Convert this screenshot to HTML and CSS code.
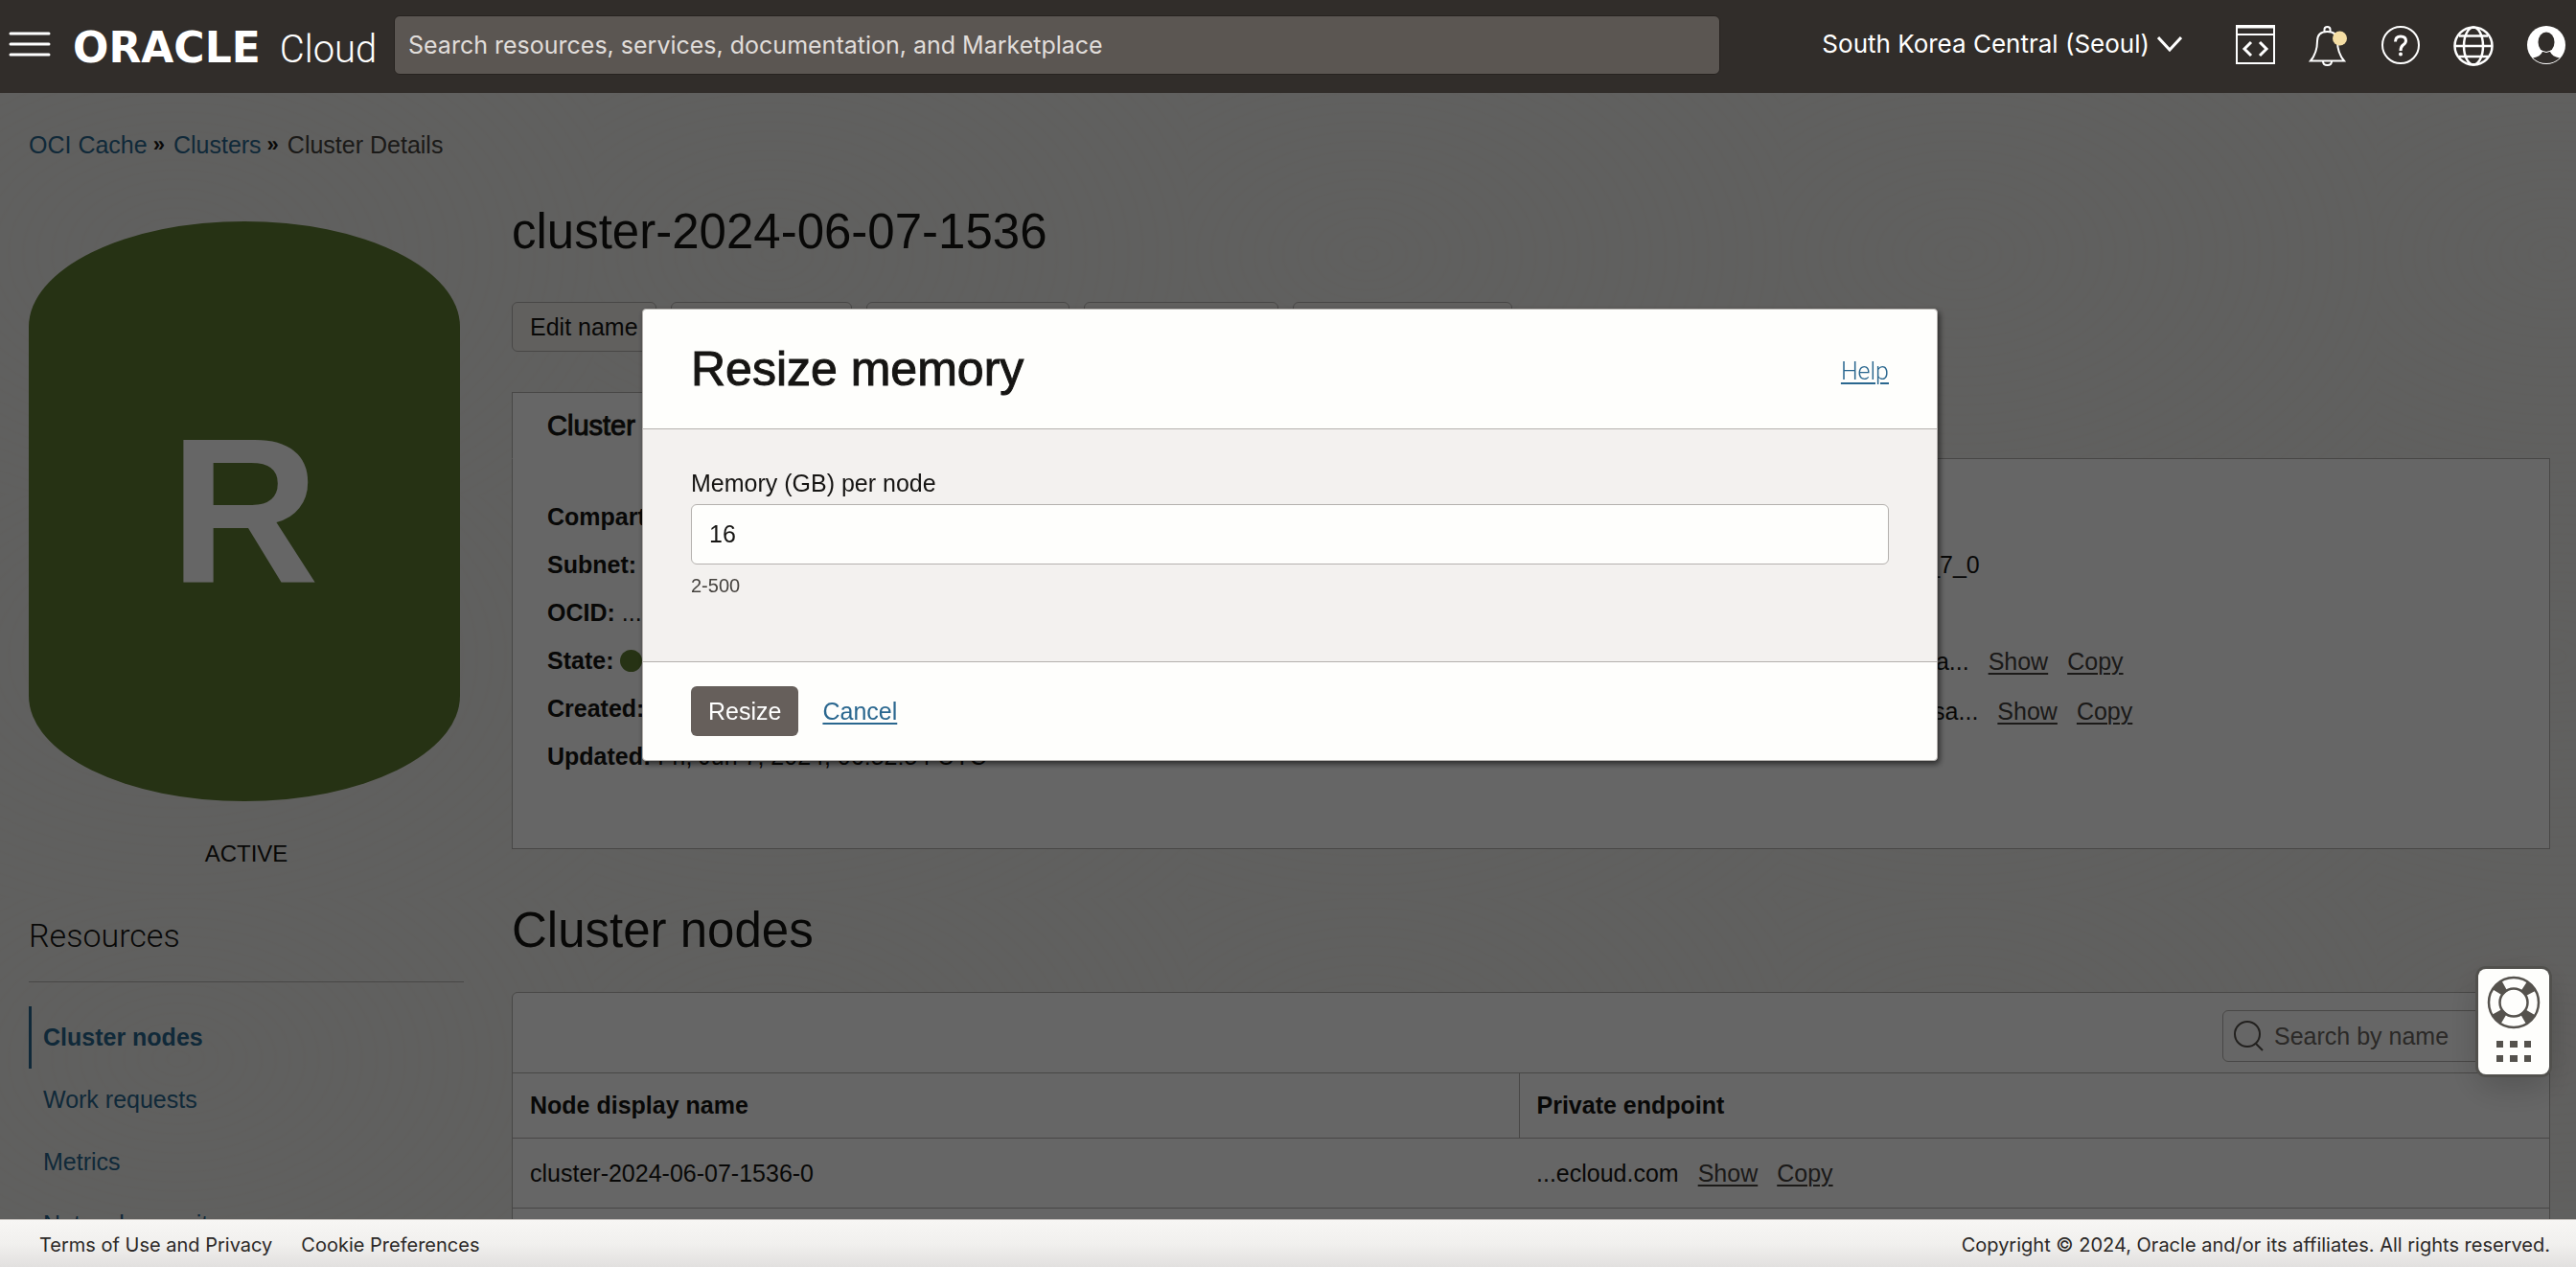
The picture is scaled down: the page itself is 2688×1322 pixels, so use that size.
FILE: index.html
```html
<!DOCTYPE html>
<html lang="en">
<head>
<meta charset="utf-8">
<title>Cluster Details | Oracle Cloud</title>
<link rel="stylesheet" href="styles.css">
</head>
<body>
<header class="topbar">
  <button class="icon-button menu-button" aria-label="Open navigation menu">
    <svg width="44" height="28" viewBox="0 0 44 28"><path d="M2 3H42M2 14H42M2 25H42" stroke="#fff" stroke-width="3" stroke-linecap="round"/></svg>
  </button>
  <a class="brand" href="#"><span class="brand-name">ORACLE</span><span class="brand-product">Cloud</span></a>
  <input class="global-search" type="search" aria-label="Search" placeholder="Search resources, services, documentation, and Marketplace">
  <button class="region">South Korea Central (Seoul)
    <svg width="26" height="16" viewBox="0 0 26 16" fill="none"><path d="M1 1L13 14L25 1" stroke="#fff" stroke-width="3"/></svg>
  </button>
  <nav class="topbar-icons" aria-label="Tools">
    <button class="icon-button" aria-label="Developer tools">
      <svg width="44" height="44" viewBox="0 0 44 44" fill="none" stroke="#fff" stroke-width="2"><path d="M3 2H42V41H3ZM3 11H42"/><path d="M3 3H42" stroke-width="3"/><path d="M18 19L11 26L18 33M27 19L34 26L27 33" stroke-width="3"/></svg>
    </button>
    <button class="icon-button" aria-label="Announcements">
      <svg width="44" height="44" viewBox="0 0 44 44" fill="none" stroke="#fff" stroke-width="2"><path d="M18.500 8V5.500Q18.500 3 21.500 3Q24.500 3 24.500 5.500V8"/><path d="M4 38.500Q11 30 11 18Q11 8 21.500 8Q32 8 32 18Q32 30 39 38.500Z"/><path d="M17 39Q17 43 21.500 43Q26 43 26 39"/><circle cx="34.500" cy="15" r="7.500" fill="#f5dea4" stroke="none"/></svg>
    </button>
    <button class="icon-button" aria-label="Help">
      <svg width="44" height="44" viewBox="0 0 44 44" fill="none" stroke="#fff" stroke-width="2"><circle cx="22" cy="22" r="19"/><path d="M16.500 18.500Q16.500 13 22 13Q27.500 13 27.500 17.500Q27.500 20 24.500 22Q22 24 22 28" stroke-width="3"/><circle cx="22" cy="31.500" r="2" fill="#fff" stroke="none"/></svg>
    </button>
    <button class="icon-button" aria-label="Language">
      <svg width="44" height="44" viewBox="0 0 44 44" fill="none" stroke="#fff" stroke-width="2.500"><circle cx="22" cy="23" r="19.500"/><ellipse cx="22" cy="23" rx="10" ry="19.500"/><path d="M22 3.500V5M2.500 23H41.500M7 12.500H37M7 34H37"/></svg>
    </button>
    <button class="icon-button" aria-label="Profile">
      <svg width="44" height="44" viewBox="0 0 44 44"><circle cx="22" cy="22" r="20" fill="#fff"/><ellipse cx="22" cy="19" rx="8.500" ry="10.500" fill="#312d2a"/><path d="M8 35.500Q16 34 18 29H26Q28 34 36 35.500Q30 41 22 41Q14 41 8 35.500Z" fill="#312d2a"/><path d="M17 28Q22 31 27 28" fill="none" stroke="#fff"/></svg>
    </button>
  </nav>
</header>

<div class="page">
  <nav class="breadcrumb" aria-label="Breadcrumb">
    <a href="#">OCI Cache</a><span class="crumb-sep">»</span><a href="#">Clusters</a><span class="crumb-sep">»</span><span class="crumb-current">Cluster Details</span>
  </nav>
  <div class="layout">
    <aside class="sidebar">
      <div class="status-icon">R</div>
      <p class="status-label">ACTIVE</p>
      <h2 class="resources-title">Resources</h2>
      <ul class="resource-list">
        <li><a class="resource active" href="#">Cluster nodes</a></li>
        <li><a class="resource" href="#">Work requests</a></li>
        <li><a class="resource" href="#">Metrics</a></li>
        <li><a class="resource" href="#">Network security groups</a></li>
      </ul>
    </aside>
    <main class="content">
      <h1 class="title">cluster-2024-06-07-1536</h1>
      <div class="actions">
        <button class="action">Edit name</button>
        <button class="action">Resize nodes</button>
        <button class="action">Resize memory</button>
        <button class="action">Move resource</button>
        <button class="action action-menu">More actions
          <svg width="20" height="12" viewBox="0 0 20 12" fill="none"><path d="M1 1L10 10L19 1" stroke="#161513" stroke-width="2"/></svg>
        </button>
      </div>
      <div class="tabs"><button class="tab">Cluster information</button><button class="tab tab-inactive">Tags</button></div>
      <section class="details">
        <div>
          <p class="detail"><b>Compartment:</b> cache</p>
          <p class="detail"><b>Subnet:</b> private subnet</p>
          <p class="detail"><b>OCID:</b> ...q7oa6a <a class="plain-link" href="#">Show</a> <a class="plain-link" href="#">Copy</a></p>
          <p class="detail"><b>State:</b> <span class="state-dot"></span> Active</p>
          <p class="detail"><b>Created:</b> Fri, Jun 7, 2024, 06:36:51 UTC</p>
          <p class="detail"><b>Updated:</b> Fri, Jun 7, 2024, 06:52:54 UTC</p>
        </div>
        <div>
          <p class="detail"><b>Node count:</b> 3</p>
          <p class="detail"><b>Software version:</b> REDIS_7_0</p>
          <p class="detail"><b>Memory per node:</b> 8 GB</p>
          <p class="detail endpoint"><span><b>Primary endpoint:</b> aaaaqsa...</span><a class="plain-link" href="#">Show</a><a class="plain-link" href="#">Copy</a></p>
          <p class="detail endpoint"><span><b>Replicas endpoint:</b> aaaaqsa...</span><a class="plain-link" href="#">Show</a><a class="plain-link" href="#">Copy</a></p>
        </div>
      </section>
      <h2 class="title nodes-title">Cluster nodes</h2>
      <section class="table-panel">
        <div class="toolbar">
          <label class="node-search">
            <svg width="32" height="32" viewBox="0 0 32 32" fill="none" stroke="#55524d" stroke-width="2"><circle cx="14" cy="14" r="13"/><path d="M23 24L30 31"/></svg>
            <input type="search" placeholder="Search by name" aria-label="Search by name">
          </label>
        </div>
        <table class="nodes">
          <colgroup><col class="col-name"><col></colgroup>
          <thead><tr><th>Node display name</th><th>Private endpoint</th></tr></thead>
          <tbody>
            <tr><td>cluster-2024-06-07-1536-0</td><td><span class="endpoint">...ecloud.com<a class="plain-link" href="#">Show</a><a class="plain-link" href="#">Copy</a></span></td></tr>
            <tr><td>cluster-2024-06-07-1536-1</td><td><span class="endpoint">...ecloud.com<a class="plain-link" href="#">Show</a><a class="plain-link" href="#">Copy</a></span></td></tr>
          </tbody>
        </table>
      </section>
    </main>
  </div>
</div>

<div class="overlay">
  <form class="modal" role="dialog" aria-labelledby="modal-title">
    <div class="modal-head">
      <h2 id="modal-title">Resize memory</h2>
      <a class="help-link" href="#">Help</a>
    </div>
    <div class="modal-body">
      <label for="memory">Memory (GB) per node</label>
      <input id="memory" type="text" inputmode="numeric" value="16" aria-describedby="memory-hint">
      <p class="hint" id="memory-hint">2-500</p>
    </div>
    <div class="modal-foot">
      <button class="primary" type="button">Resize</button>
      <a class="cancel" href="#">Cancel</a>
    </div>
  </form>
</div>

<button class="support" aria-label="Support">
  <svg width="56" height="56" viewBox="0 0 56 56" fill="none" stroke="#55524d">
    <circle cx="28" cy="28" r="20" stroke-width="13" stroke-dasharray="10 21.416" stroke-dashoffset="-10.708"/>
    <circle cx="28" cy="28" r="26" stroke-width="2.500"/><circle cx="28" cy="28" r="14.500" stroke-width="2.500"/>
  </svg>
  <svg width="36" height="22" viewBox="0 0 36 22" fill="#55524d"><path d="M0 0h7v7h-7zM14 0h8v7h-8zM29 0h7v7h-7zM0 15h7v7h-7zM14 15h8v7h-8zM29 15h7v7h-7z"/></svg>
</button>

<footer class="footer">
  <a href="#">Terms of Use and Privacy</a>
  <a href="#">Cookie Preferences</a>
  <span class="copyright">Copyright © 2024, Oracle and/or its affiliates. All rights reserved.</span>
</footer>
</body>
</html>
```
FILE: styles.css
```css
* { box-sizing: border-box; }

body {
  margin: 0;
  height: 100vh;
  overflow: hidden;
  background: #f1f0ed;
  color: #161513;
  font: 25px/30px "Liberation Sans", Arial, sans-serif;
}

h1, h2, p, ul { margin: 0; padding: 0; }
ul { list-style: none; }
svg { display: block; flex: none; }
a { color: #2a678f; text-decoration: none; }
button, input { font: inherit; color: inherit; }
button { cursor: pointer; }

/* Top bar */
.topbar {
  position: relative;
  z-index: 20;
  display: flex;
  align-items: center;
  height: 97px;
  padding: 0 9px;
  background: #312d2a;
  color: #fff;
  font-family: Inter, "Liberation Sans", sans-serif;
}
.icon-button { padding: 0; border: 0; background: none; }
.menu-button { margin-right: 23px; padding-bottom: 6px; }
.brand { display: flex; align-items: baseline; gap: 20px; width: 335px; color: #fff; white-space: nowrap; padding-top: 5px; }
.brand-name { font: bold 44px/48px "DejaVu Sans", sans-serif; }
.brand-product { font: 300 40px/48px Roboto, sans-serif; }
.global-search {
  flex: 0 1 1384px;
  min-width: 0;
  height: 62px;
  margin-bottom: 3px;
  padding: 0 14px;
  border: 1px solid #26221f;
  border-radius: 6px;
  background: #5b5652;
}
.global-search::placeholder { color: #e0ddda; opacity: 1; }
.region {
  display: flex;
  align-items: center;
  gap: 8px;
  margin-left: auto;
  margin-right: 54px;
  padding: 0 0 6px;
  border: 0;
  background: none;
  font-size: 26px;
  white-space: nowrap;
}
.topbar-icons { display: flex; gap: 32px; padding-bottom: 4px; }

/* Page */
.page {
  min-height: 100vh;
  padding: 39px 27px 0 30px;
  background:
    repeating-radial-gradient(ellipse 300px 200px at 30% 40%, transparent 0 3%, rgba(120, 110, 90, .02) 4%, transparent 5%) 0 0 / 620px 420px,
    #f1f0ed;
}
.breadcrumb { display: flex; color: #161513; }
.crumb-sep { margin: 0 9px 0 6px; font-weight: bold; font-size: 22px; }
.crumb-current { color: #45423e; }
.layout { display: grid; grid-template-columns: 454px 1fr; column-gap: 50px; margin-top: 46px; }

.status-icon {
  display: flex;
  align-items: center;
  justify-content: center;
  width: 450px;
  height: 605px;
  margin-top: 19px;
  padding-bottom: 4px;
  border-radius: 225px / 110px;
  background: #5f7d32;
  color: #fff;
  font-size: 216px;
  font-weight: bold;
}
.status-label { margin-top: 40px; text-align: center; font-size: 24px; }
.resources-title {
  margin-top: 50px;
  padding-bottom: 28px;
  border-bottom: 1px solid #b4b1ae;
  font: 300 34px/40px Roboto, sans-serif;
}
.resource-list { margin-top: 25px; }
.resource { display: block; padding-left: 12px; border-left: 3px solid transparent; line-height: 65px; }
.resource.active { border-left-color: #2a678f; font-weight: bold; }

.content { min-width: 0; }
.title { font-size: 51px; line-height: 60px; font-weight: normal; }
.actions { display: flex; gap: 15px; margin-top: 43px; }
.action {
  height: 52px;
  padding: 0 18px;
  border: 1px solid #b4b1ae;
  border-radius: 6px;
  background: #f3f0ec;
  white-space: nowrap;
}
.action-menu { display: flex; align-items: center; gap: 28px; }

.tabs { display: flex; margin-top: 42px; }
.tab {
  position: relative;
  height: 70px;
  margin-bottom: -1px;
  padding: 0 36px;
  border: 1px solid #b4b1ae;
  border-bottom-color: #fff;
  background: #fff;
  font-size: 29px;
  line-height: 40px;
  -webkit-text-stroke: 1px #161513;
}
.tab-inactive { border-color: transparent; background: none; }
.details {
  display: grid;
  grid-template-columns: 1146px 1fr;
  padding: 35px 36px 71px;
  border: 1px solid #b4b1ae;
  background: #fff;
}
.detail { line-height: 50px; white-space: nowrap; }
.endpoint { display: flex; gap: 20px; }
.detail.endpoint { line-height: 52px; }
.plain-link { color: #45423e; text-decoration: underline; text-decoration-thickness: 2px; text-underline-offset: 3px; }
.state-dot { display: inline-block; width: 23px; height: 23px; border-radius: 50%; background: #5f7d32; vertical-align: -3px; }

.nodes-title { margin-top: 55px; }
.table-panel { margin-top: 34px; border: 1px solid #b4b1ae; border-radius: 6px; background: #fff; }
.toolbar { display: flex; justify-content: flex-end; padding: 18px 20px 11px; border-bottom: 1px solid #b4b1ae; }
.node-search {
  display: flex;
  align-items: center;
  gap: 10px;
  width: 321px;
  height: 54px;
  padding: 0 11px;
  border: 1px solid #b4b1ae;
  border-radius: 6px;
}
.node-search input { flex: 1; min-width: 0; padding: 0; border: 0; background: none; outline: 0; }
.node-search input::placeholder { color: #6b6762; opacity: 1; }
.nodes { width: 100%; border-collapse: collapse; table-layout: fixed; text-align: left; }
.col-name { width: 1050px; }
.nodes th, .nodes td { padding: 0 18px; border-bottom: 1px solid #b4b1ae; }
.nodes th { height: 67px; }
.nodes td { height: 73px; }
.nodes th + th { border-left: 1px solid #b4b1ae; }

/* Dialog */
.overlay {
  position: fixed;
  inset: 0;
  z-index: 10;
  display: flex;
  justify-content: center;
  align-items: flex-start;
  padding: 322px 0 0 4px;
  background: rgba(0, 0, 0, .6);
}
.modal {
  width: 1352px;
  max-width: 100%;
  border: 1px solid #b4b1ae;
  border-radius: 4px;
  background: #fefefc;
  box-shadow: 2px 3px 6px rgba(0, 0, 0, .6);
}
.modal-head { display: flex; align-items: center; justify-content: space-between; height: 125px; padding: 0 50px; border-bottom: 1px solid #b4b1ae; }
.modal-head h2 { font-size: 50px; line-height: 60px; font-weight: normal; -webkit-text-stroke: 1px #161513; }
.help-link { padding-top: 5px; font-family: Roboto, sans-serif; font-weight: 300; text-decoration: underline; text-decoration-thickness: 2px; text-underline-offset: 3px; }
.modal-body { display: flex; flex-direction: column; padding: 41px 50px 67px; background: #f3f1ef; border-bottom: 1px solid #b4b1ae; }
.modal-body input { width: 100%; height: 63px; margin-top: 7px; padding: 0 18px; border: 1px solid #b4b1ae; border-radius: 6px; background: #fefefc; }
.hint { margin-top: 10px; font-size: 20px; line-height: 24px; color: #45423e; }
.modal-foot { display: flex; align-items: center; gap: 25px; padding: 25px 50px; }
.primary { height: 52px; padding: 0 18px; border: 0; border-radius: 6px; background: #665f5b; color: #fff; }
.cancel { text-decoration: underline; text-decoration-thickness: 2px; text-underline-offset: 3px; }

/* Support widget floats over the page */
.support {
  position: fixed;
  right: 28px;
  top: 1011px;
  z-index: 30;
  display: flex;
  flex-direction: column;
  align-items: center;
  gap: 12px;
  width: 74px;
  padding: 7px 0 13px;
  border: 0;
  border-radius: 8px;
  background: #fefefc;
  box-shadow: 0 0 0 3px #51504d, 0 12px 36px rgba(0, 0, 0, .2);
}

.footer {
  position: fixed;
  left: 0;
  right: 0;
  bottom: 0;
  z-index: 25;
  display: flex;
  align-items: center;
  gap: 30px;
  height: 50px;
  padding: 3px 27px 0 41px;
  border-top: 1px solid #c4c0bc;
  background: linear-gradient(#f7f6f4, #f1f0ee 50%, #e2e0df);
  color: #2b2826;
  font: 20px/24px Inter, "Liberation Sans", sans-serif;
}
.footer a { color: inherit; }
.copyright { margin-left: auto; }
```
